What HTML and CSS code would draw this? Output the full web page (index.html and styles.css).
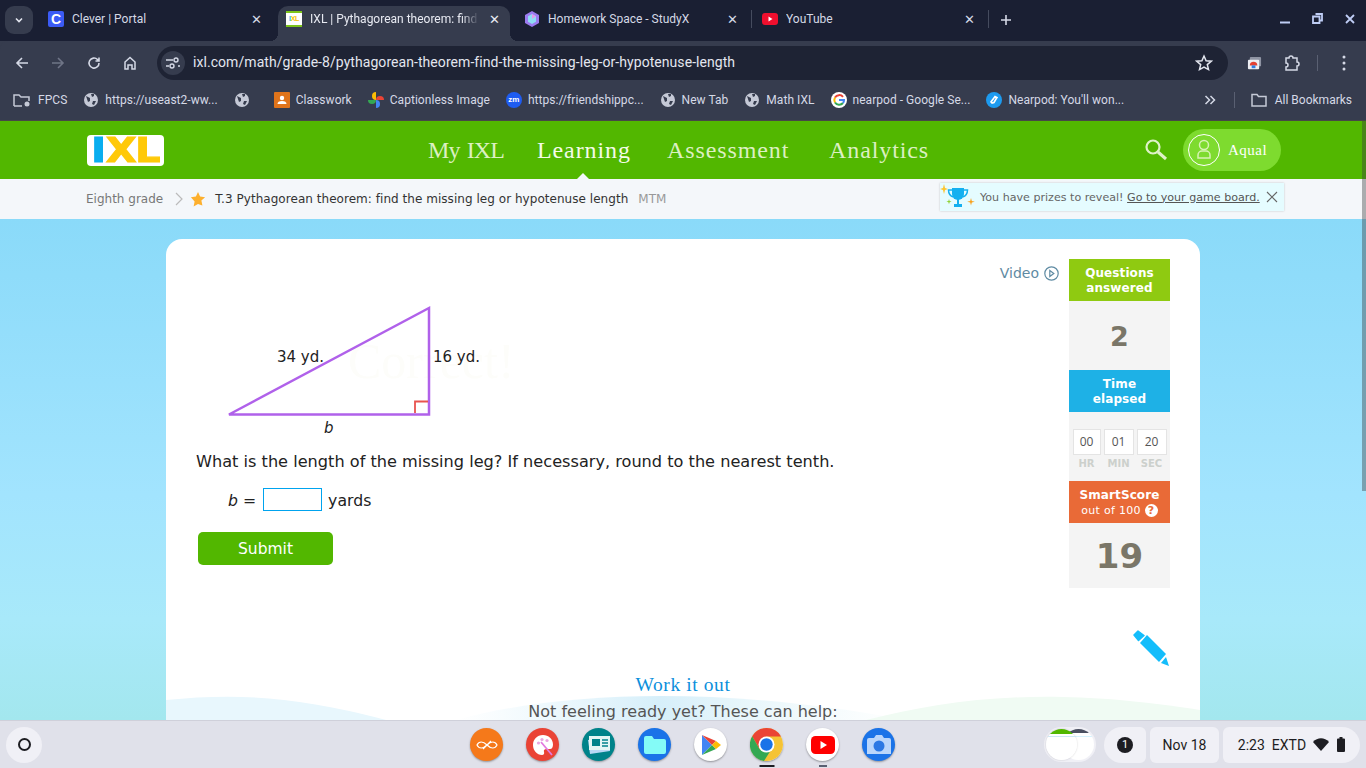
FILE: index.html
```html
<!DOCTYPE html>
<html lang="en">
<head>
  <meta charset="UTF-8" />
  <title>IXL | Pythagorean theorem</title>
  <link rel="stylesheet" href="styles.css">
</head>
<body>
  <!-- browser chrome -->
  <div class="tabstrip">
    <div class="tab-menu"><svg width="12" height="12" viewBox="0 0 12 12"><path d="M3 4.500l3 3 3-3" fill="none" stroke="#e3e6ef" stroke-width="1.600"/></svg></div>
    <div class="tab tab-clever">
      <span class="fav fav-clever">C</span><span class="tab-title">Clever | Portal</span><span class="tab-x">✕</span>
    </div>
    <div class="tab tab-active">
      <span class="fav fav-ixl"><b>I</b><i>XL</i></span><span class="tab-title tab-fade">IXL | Pythagorean theorem: find</span><span class="tab-x">✕</span>
    </div>
    <div class="tab tab-study">
      <svg class="fav" width="16" height="16" viewBox="0 0 16 16"><path d="M8 0l7 4v8l-7 4-7-4V4z" fill="#9c7bf0"/><path d="M8 3l4 2.300v5.400L8 13l-4-2.300V5.300z" fill="#8fdcf5"/><path d="M8 3l4 2.300L8 8z" fill="#e59ae8"/></svg><span class="tab-title">Homework Space - StudyX</span><span class="tab-x">✕</span>
    </div>
    <div class="tab tab-sep">
      <svg class="fav" width="16" height="16" viewBox="0 0 16 16"><rect y="2" width="16" height="12" rx="3" fill="#f00f2e"/><path d="M6.500 5.500l4 2.500-4 2.500z" fill="#fff"/></svg><span class="tab-title">YouTube</span><span class="tab-x">✕</span>
    </div>
    <div class="tab-plus"><svg width="12" height="12" viewBox="0 0 12 12"><path d="M6 1v10M1 6h10" stroke="#d5d9e6" stroke-width="1.600"/></svg></div>
    <div class="win-btns">
      <svg width="10" height="10" viewBox="0 0 10 10"><path d="M0 8.500h10" stroke="#bfcdf5" stroke-width="2"/></svg>
      <svg width="11" height="11" viewBox="0 0 11 11"><path d="M3.500 1h6.500v6.500H7.500M1 3.500h6.500v6.500H1z" fill="none" stroke="#bfcdf5" stroke-width="1.800"/></svg>
      <svg width="10" height="10" viewBox="0 0 10 10"><path d="M1 1l8 8M9 1l-8 8" stroke="#bfcdf5" stroke-width="1.800"/></svg>
    </div>
  </div>

  <div class="toolbar">
    <svg class="tool" width="16" height="16" viewBox="0 0 16 16"><path d="M14 8H3M8 3L3 8l5 5" fill="none" stroke="#d5d9e6" stroke-width="1.600"/></svg>
    <svg class="tool" width="16" height="16" viewBox="0 0 16 16"><path d="M2 8h11M8 3l5 5-5 5" fill="none" stroke="#6f7587" stroke-width="1.600"/></svg>
    <svg class="tool" width="16" height="16" viewBox="0 0 16 16"><path d="M13 8a5 5 0 1 1-1.500-3.500L13 6M13 2.500V6H9.500" fill="none" stroke="#d5d9e6" stroke-width="1.600"/></svg>
    <svg class="tool" width="16" height="16" viewBox="0 0 16 16"><path d="M3 14V7l5-4.500L13 7v7h-3V10H6v4z" fill="none" stroke="#d5d9e6" stroke-width="1.500"/></svg>
    <div class="omnibox">
      <span class="site-btn"><svg width="14" height="12" viewBox="0 0 14 12"><path d="M0 3h7M0 9h3M12 9h2" stroke="#d5d9e6" stroke-width="1.400"/><circle cx="10" cy="3" r="2" fill="none" stroke="#d5d9e6" stroke-width="1.400"/><circle cx="6" cy="9" r="2" fill="none" stroke="#d5d9e6" stroke-width="1.400"/></svg></span>
      <span class="url">ixl.com/math/grade-8/pythagorean-theorem-find-the-missing-leg-or-hypotenuse-length</span>
      <svg class="omni-star" width="18" height="18" viewBox="0 0 18 18"><path d="M9 2l2.100 4.700 5.100.5-3.900 3.400 1.200 5L9 13l-4.500 2.600 1.200-5L1.800 7.200l5.100-.5z" fill="none" stroke="#e3e6ef" stroke-width="1.500"/></svg>
    </div>
    <div class="tool-right">
      <svg width="15" height="15" viewBox="0 0 16 16"><rect x="3" y="1" width="12" height="10" rx="1" fill="#8f94a3"/><rect x="1" y="4" width="12" height="10" rx="1" fill="#eceef3"/><path d="M3 10a4 4 0 0 1 8 0z" fill="#e34133"/><path d="M5 10h4v3H5z" fill="#2f7de1"/></svg>
      <svg class="tool-ext" width="18" height="18" viewBox="0 0 18 18"><path d="M3 4h3a2 2 0 0 1 4 0h4v4a2 2 0 0 1 0 4v4H3v-3a2 2 0 0 0 0-4z" fill="none" stroke="#d5d9e6" stroke-width="1.500"/></svg>
      <span class="tool-sep"></span>
      <svg class="tool-dots" width="4" height="16" viewBox="0 0 4 16"><circle cx="2" cy="2" r="1.500" fill="#d5d9e6"/><circle cx="2" cy="8" r="1.500" fill="#d5d9e6"/><circle cx="2" cy="14" r="1.500" fill="#d5d9e6"/></svg>
    </div>
  </div>

  <div class="bookmarks">
    <a class="bm"><svg width="19" height="16" viewBox="0 0 19 16"><path d="M1 14V3h5l2 2h8v4M1 14h8" fill="none" stroke="#c5c9d6" stroke-width="1.500"/><circle cx="14" cy="12" r="2.500" fill="#c5c9d6"/></svg>FPCS</a>
    <a class="bm"><svg class="globe" width="16" height="16" viewBox="0 0 16 16"><circle cx="8" cy="8" r="7" fill="#c5c9d6"/><path d="M3 4l4 2 0 3-2 1zM10 9l3 0-2 4-2-1zM8 2l3 0 0 2-2 1z" fill="#363c4e"/></svg>https://useast2-ww...</a>
    <a class="bm bm-empty"><svg class="globe" width="16" height="16" viewBox="0 0 16 16"><circle cx="8" cy="8" r="7" fill="#c5c9d6"/><path d="M3 4l4 2 0 3-2 1zM10 9l3 0-2 4-2-1zM8 2l3 0 0 2-2 1z" fill="#363c4e"/></svg></a>
    <a class="bm"><svg width="16" height="16" viewBox="0 0 16 16"><rect width="16" height="16" rx="1" fill="#e0741b"/><circle cx="8" cy="6" r="2.200" fill="#fff"/><path d="M3.500 12a4.500 3 0 0 1 9 0z" fill="#fff"/></svg>Classwork</a>
    <a class="bm"><svg width="16" height="16" viewBox="0 0 16 16"><path d="M8 8V0a4 4 0 0 0 0 8z" fill="#fbbc05"/><path d="M8 8h8a4 4 0 0 0-8 0z" fill="#ea4335"/><path d="M8 8v8a4 4 0 0 0 0-8z" fill="#4285f4"/><path d="M8 8H0a4 4 0 0 0 8 0z" fill="#34a853"/></svg>Captionless Image</a>
    <a class="bm"><span class="fav-zm">zm</span>https://friendshippc...</a>
    <a class="bm"><svg class="globe" width="16" height="16" viewBox="0 0 16 16"><circle cx="8" cy="8" r="7" fill="#c5c9d6"/><path d="M3 4l4 2 0 3-2 1zM10 9l3 0-2 4-2-1zM8 2l3 0 0 2-2 1z" fill="#363c4e"/></svg>New Tab</a>
    <a class="bm"><svg class="globe" width="16" height="16" viewBox="0 0 16 16"><circle cx="8" cy="8" r="7" fill="#c5c9d6"/><path d="M3 4l4 2 0 3-2 1zM10 9l3 0-2 4-2-1zM8 2l3 0 0 2-2 1z" fill="#363c4e"/></svg>Math IXL</a>
    <a class="bm"><svg width="16" height="16" viewBox="0 0 16 16"><circle cx="8" cy="8" r="8" fill="#fff"/><path d="M12 4.800A5 5 0 0 0 4 5.500" fill="none" stroke="#ea4335" stroke-width="2"/><path d="M4 5.500a5 5 0 0 0 0 5" fill="none" stroke="#fbbc05" stroke-width="2"/><path d="M4 10.500a5 5 0 0 0 8 .5" fill="none" stroke="#34a853" stroke-width="2"/><path d="M12 11a5 5 0 0 0 1-3H8" fill="none" stroke="#4285f4" stroke-width="2"/></svg>nearpod - Google Se...</a>
    <a class="bm"><svg width="16" height="16" viewBox="0 0 16 16"><circle cx="8" cy="8" r="8" fill="#1d9bf0"/><path d="M6 11l-1-1 4-5.500 2 1-1 1.500-2 3.500z" fill="none" stroke="#fff" stroke-width="1.600"/></svg>Nearpod: You'll won...</a>
    <span class="bm-more"><svg width="12" height="12" viewBox="0 0 12 12"><path d="M1.500 2l4 4-4 4M6.500 2l4 4-4 4" fill="none" stroke="#d5d9e6" stroke-width="1.500"/></svg></span>
    <span class="bm-sep"></span>
    <a class="bm bm-all"><svg width="18" height="16" viewBox="0 0 18 16"><path d="M2 14V2.500h5l1.500 2H16V14z" fill="none" stroke="#c5c9d6" stroke-width="1.500"/></svg>All Bookmarks</a>
  </div>

  <!-- page -->
  <div class="viewport">
    <div class="scroll-thumb"></div>
    <header class="ixl-head">
      <div class="logo"><div class="logo-text"><span class="logo-i">I</span><span class="logo-x">X</span><span class="logo-l">L</span></div></div>
      <nav class="nav">
        <a class="nav-my">My IXL</a>
        <a class="nav-on">Learning</a>
        <a>Assessment</a>
        <a>Analytics</a>
      </nav>
      <svg class="search" width="26" height="26" viewBox="0 0 26 26"><circle cx="10" cy="10" r="6.500" fill="none" stroke="#dff2c8" stroke-width="2.200"/><path d="M15 15l8 7" stroke="#dff2c8" stroke-width="3"/></svg>
      <div class="user">
        <span class="avatar"><svg width="32" height="32" viewBox="0 0 32 32"><circle cx="16" cy="16" r="15.500" fill="none" stroke="#fff"/><circle cx="16" cy="11" r="4.500" fill="none" stroke="#d8f2b5" stroke-width="1.500"/><path d="M10 24v-3a4 4 0 0 1 4-4h4a4 4 0 0 1 4 4v3z" fill="none" stroke="#d8f2b5" stroke-width="1.500"/></svg></span>
        <span class="user-name">Aqual</span>
      </div>
    </header>

    <div class="crumbs">
      <span class="crumb-grade">Eighth grade</span>
      <svg class="crumb-arrow" width="8" height="14" viewBox="0 0 8 14"><path d="M1 1l6 6-6 6" fill="none" stroke="#bbb" stroke-width="1.200"/></svg>
      <svg class="crumb-star" width="16" height="16" viewBox="0 0 16 16"><path d="M8 1l2.100 4.600 5 .6-3.700 3.400 1 4.900L8 13l-4.400 2.500 1-4.900L.9 6.200l5-.6z" fill="#fdb02e"/></svg>
      <span class="crumb-title">T.3 Pythagorean theorem: find the missing leg or hypotenuse length</span>
      <span class="crumb-code">MTM</span>
      <div class="prize">
        <svg class="trophy" width="36" height="26" viewBox="0 0 36 26"><path d="M12 4h12v6a6 6 0 0 1-12 0z" fill="#14b0f0"/><path d="M12 6H8.500c0 4 1.500 6 5 7M24 6h3.500c0 4-1.500 6-5 7" fill="none" stroke="#14b0f0" stroke-width="1.500"/><path d="M17 15h2v5h3v3h-8v-3h3z" fill="#14b0f0"/><path d="M4 0l1 4 3 1-3 1-1 4-1-4-3-1 3-1z" fill="#fdc52e"/><path d="M9 15l.6 2 2 .6-2 .6-.6 2-.6-2-2-.6 2-.6z" fill="#8fd130"/><path d="M31 14l.8 3 3 .8-3 .8-.8 3-.8-3-3-.8 3-.8z" fill="#f9a11b"/></svg>
        <span class="prize-text">You have prizes to reveal! <u>Go to your game board.</u></span>
        <svg class="prize-x" width="12" height="12" viewBox="0 0 12 12"><path d="M1 1l10 10M11 1L1 11" stroke="#666" stroke-width="1.100"/></svg>
      </div>
    </div>

    <div class="page">
      <div class="card">
        <svg class="waves" width="1034" height="32" viewBox="0 0 1034 32" preserveAspectRatio="none">
          <defs>
            <linearGradient id="midfade" x1="0" x2="1" y1="0" y2="0"><stop offset="0" stop-color="#def3fb" stop-opacity="0"/><stop offset=".45" stop-color="#d6effa"/><stop offset="1" stop-color="#e4f6f8" stop-opacity="0"/></linearGradient>
          </defs>
          <path d="M0 12C70 5 130 8 220 32H0z" fill="#e8f7fd"/>
          <path d="M290 32C400 2 560 -2 740 32z" fill="url(#midfade)"/>
          <path d="M700 32C790 10 880 -2 1034 22V32z" fill="#f0fbf3"/>
        </svg>
        <div class="practice">
          <div class="main">
            <a class="video">Video <svg width="15" height="15" viewBox="0 0 15 15"><circle cx="7.500" cy="7.500" r="6.700" fill="none" stroke="#5f8ba3" stroke-width="1.200"/><path d="M5.800 4.500l4 3-4 3z" fill="none" stroke="#5f8ba3" stroke-width="1.200"/></svg></a>
            <svg class="diagram" width="320" height="140" viewBox="0 0 320 140">
              <text class="ghost" x="128" y="78">Correct!</text>
              <path d="M209 8V114.500H9z" fill="none" stroke="#b061ea" stroke-width="2.500"/>
              <path d="M195 113V101.500H208" fill="none" stroke="#e8534f" stroke-width="1.800"/>
              <text class="dia-label" x="57" y="62">34 yd.</text>
              <text class="dia-label" x="213" y="62">16 yd.</text>
              <text class="dia-label dia-var" x="104" y="133">b</text>
            </svg>
            <p class="question">What is the length of the missing leg? If necessary, round to the nearest tenth.</p>
            <div class="answer">
              <span class="eq"><i>b</i> =</span>
              <input class="answer-input" type="text" />
              <span>yards</span>
            </div>
            <button class="submit">Submit</button>
          </div>
          <aside class="side">
            <div class="side-head side-green">Questions<br>answered</div>
            <div class="side-count">2</div>
            <div class="side-head side-blue">Time<br>elapsed</div>
            <div class="timer">
              <div class="timer-cell"><span class="timer-num">00</span><span class="timer-unit">HR</span></div>
              <div class="timer-cell"><span class="timer-num">01</span><span class="timer-unit">MIN</span></div>
              <div class="timer-cell"><span class="timer-num">20</span><span class="timer-unit">SEC</span></div>
            </div>
            <div class="side-head side-orange">SmartScore<br><span class="side-sub">out of 100 <span class="help">?</span></span></div>
            <div class="side-score">19</div>
          </aside>
        </div>
        <div class="pencil-row">
          <svg width="37" height="36" viewBox="0 0 37 36"><path d="M5 1l6 4.500-5.500 5L1 5z" fill="#14bdfb" stroke="#14bdfb" stroke-width="1.500" stroke-linejoin="round"/><path d="M14 5l19 19-7 8L7 13z" fill="#14bdfb"/><path d="M33 27l3 9-8-3z" fill="#14bdfb"/></svg>
        </div>
        <h3 class="work">Work it out</h3>
        <p class="ready">Not feeling ready yet? These can help:</p>
      </div>
    </div>
  </div>

  <!-- chromeos shelf -->
  <footer class="shelf">
    <div class="launcher"><span class="launcher-ring"></span></div>
    <div class="apps">
      <span class="app app-orange"><svg width="22" height="10" viewBox="0 0 22 10"><path d="M1 5c2-4 6-4 10 0s8 4 10 0c-2-4-6-4-10 0s-8 4-10 0zM7 9l8-8" fill="none" stroke="#fff" stroke-width="1.200"/></svg></span>
      <span class="app app-red"><svg width="24" height="24" viewBox="0 0 24 24"><path d="M12 2C6 2 2 6.500 2 12s4 10 9 10c2 0 2.500-1.500 2-3-.6-1.700.6-3 2.500-3H19c2 0 3-2 3-4.500C22 6 17.500 2 12 2z" fill="#fff"/><circle cx="7.500" cy="10" r="1.600" fill="#e9a5e0"/><circle cx="11" cy="6.500" r="1.600" fill="#e9a5e0"/><circle cx="16" cy="7.500" r="1.600" fill="#e9a5e0"/><path d="M10 9l11 13" stroke="#e27be0" stroke-width="1.800"/></svg></span>
      <span class="app app-teal"><svg width="24" height="20" viewBox="0 0 24 20"><path d="M1 5l20-2 2 13-20 3z" fill="#b8d8f5"/><rect x="2" y="1" width="21" height="14" fill="#e4f6f4"/><rect x="5" y="4" width="8" height="7" fill="#00838a"/><path d="M15 5h6M15 8h6M15 11h6" stroke="#00838a" stroke-width="1.500"/></svg></span>
      <span class="app app-blue"><svg width="22" height="18" viewBox="0 0 22 18"><path d="M0 2a2 2 0 0 1 2-2h6l2 3h10a2 2 0 0 1 2 2v11a2 2 0 0 1-2 2H2a2 2 0 0 1-2-2z" fill="#84fbf7"/></svg></span>
      <span class="app app-white"><svg width="20" height="22" viewBox="0 0 20 22"><path d="M1 1v20l10-10z" fill="#4285f4"/><path d="M1 1l10 10 4-4z" fill="#ea4335"/><path d="M1 21l10-10 4 4z" fill="#34a853"/><path d="M15 7l5 4-5 4-4-4z" fill="#fbbc05"/></svg></span>
      <span class="app app-chrome"><svg width="33" height="33" viewBox="0 0 33 33"><circle cx="16.500" cy="16.500" r="16.500" fill="#f5c335"/><path d="M16.500 0A16.500 16.500 0 0 0 2.200 8.200l7.500 13 6.800-12.700H31A16.500 16.500 0 0 0 16.500 0z" fill="#ea4335"/><path d="M2.200 8.200A16.500 16.500 0 0 0 14 33l7.600-12-12 .2z" fill="#34a853"/><circle cx="16.500" cy="16.500" r="8" fill="#fff"/><circle cx="16.500" cy="16.500" r="6.200" fill="#1a73e8"/></svg><span class="dot dot-dark"></span></span>
      <span class="app app-white"><svg width="24" height="18" viewBox="0 0 24 18"><rect width="24" height="18" rx="4.500" fill="#f00"/><path d="M9.500 5l6.500 4-6.500 4z" fill="#fff"/></svg><span class="dot dot-gray"></span></span>
      <span class="app app-blue"><svg width="24" height="22" viewBox="0 0 24 22"><path d="M2 4h5l2-3h6l2 3h5a2 2 0 0 1 2 2v14H0V6a2 2 0 0 1 2-2z" fill="#b9d6fb"/><circle cx="12" cy="12" r="5.500" fill="#2a78e4"/></svg></span>
    </div>
    <div class="tray">
      <div class="preview"><span class="preview-a"></span><span class="preview-b"></span></div>
      <div class="pill pill-notif"><span class="notif-dot">1</span></div>
      <div class="pill pill-date">Nov 18</div>
      <div class="pill pill-time">
        <span>2:23</span><span>EXTD</span>
        <svg width="16" height="13" viewBox="0 0 16 13"><path d="M0 4c4.500-5 11.500-5 16 0l-8 9z" fill="#1d1d22"/></svg>
        <svg class="battery" width="8" height="15" viewBox="0 0 8 15"><path d="M2.500 0h3v1.500H7a1 1 0 0 1 1 1V14a1 1 0 0 1-1 1H1a1 1 0 0 1-1-1V2.500a1 1 0 0 1 1-1h1.500z" fill="#1d1d22"/></svg>
      </div>
    </div>
  </footer>
</body>
</html>
```

FILE: styles.css
```css
* {
  box-sizing: border-box;
}
html, body {
  margin: 0;
  height: 768px;
  overflow: hidden;
}
body {
  display: flex;
  flex-direction: column;
  font-family: "DejaVu Sans", sans-serif;
  background: #363c4e;
}

/* tab strip */
.tabstrip {
  height: 41px;
  flex: none;
  display: flex;
  align-items: flex-end;
  background: #1a1f33;
  color: #d5d9e6;
  font: 12px Roboto, sans-serif;
  padding-left: 5px;
}
.tab-menu {
  width: 28px;
  height: 28px;
  margin: 0 5px 7px 0;
  border-radius: 9px;
  background: #363c4e;
  display: flex;
  align-items: center;
  justify-content: center;
}
.tab {
  height: 35px;
  padding-bottom: 9px;
  display: flex;
  align-items: center;
  flex: none;
  position: relative;
}
.tab-clever {
  width: 240px;
  padding-left: 10px;
  padding-right: 12px;
}
.tab-active {
  width: 232px;
  margin-right: 6px;
  padding-left: 8px;
  padding-right: 6px;
  background: #363c4e;
  border-radius: 10px 10px 0 0;
  color: #e8eaf2;
}
.tab-active::before,
.tab-active::after {
  content: "";
  position: absolute;
  bottom: 0;
  width: 8px;
  height: 8px;
}
.tab-active::before {
  left: -8px;
  background: radial-gradient(circle at 0 0, transparent 8px, #363c4e 8px);
}
.tab-active::after {
  right: -8px;
  background: radial-gradient(circle at 100% 0, transparent 8px, #363c4e 8px);
}
.tab-study {
  width: 235px;
  padding-left: 8px;
  padding-right: 9px;
}
.tab-sep {
  width: 238px;
  height: 18px;
  margin-bottom: 13px;
  padding: 0 9px 0 10px;
  border-left: 1px solid #454b5e;
  border-right: 1px solid #454b5e;
}
.fav {
  width: 16px;
  height: 16px;
  flex: none;
  margin-right: 8px;
}
.fav-clever {
  background: #3b5bf5;
  color: #fff;
  border-radius: 2px;
  font: bold 14px/16px "Liberation Sans", sans-serif;
  text-align: center;
}
.fav-ixl {
  background: #fff;
  border-top: 2px solid #7cc41a;
  border-bottom: 2px solid #7cc41a;
  font: 900 7px/12px "Liberation Sans", sans-serif;
  text-align: center;
  letter-spacing: -0.3px;
}
.fav-ixl b {
  color: #14b0f0;
}
.fav-ixl i {
  color: #f4c200;
  font-style: normal;
  font-weight: bold;
}
.tab-title {
  flex: 1;
  white-space: nowrap;
  overflow: hidden;
}
.tab-fade {
  margin-right: 6px;
  -webkit-mask-image: linear-gradient(to right, #000 90%, transparent);
  mask-image: linear-gradient(to right, #000 90%, transparent);
}
.tab-x {
  font-size: 13px;
  width: 18px;
  text-align: center;
  margin-right: 1px;
}
.tab-plus {
  margin: 0 0 11px 11px;
  height: 20px;
  width: 12px;
  display: flex;
  align-items: center;
}
.win-btns {
  margin-left: auto;
  align-self: flex-start;
  padding: 13px 11px 0 0;
  display: flex;
  gap: 22px;
  align-items: center;
}

/* toolbar */
.toolbar {
  height: 40px;
  flex: none;
  background: #363c4e;
  border-radius: 8px 8px 0 0;
  display: flex;
  align-items: center;
  padding: 4px 0 0 14px;
}
.tool {
  flex: none;
  margin-right: 20px;
}
.omnibox {
  width: 1071px;
  height: 34px;
  background: #1e2334;
  border-radius: 17px;
  display: flex;
  align-items: center;
  padding: 0 15px 0 4px;
  margin-left: -1px;
}
.site-btn {
  width: 24px;
  height: 24px;
  border-radius: 50%;
  background: #363c4e;
  display: flex;
  align-items: center;
  justify-content: center;
  margin-right: 8px;
}
.url {
  flex: 1;
  font: 14px Roboto, sans-serif;
  letter-spacing: 0.06px;
  margin-bottom: 2px;
  color: #e3e6ef;
}
.tool-right {
  flex: 1;
  display: flex;
  align-items: center;
  padding-left: 19px;
}
.tool-ext {
  margin-left: 21px;
}
.tool-sep {
  width: 1px;
  height: 16px;
  background: #5a6072;
  margin-left: 16px;
}
.tool-dots {
  margin-left: 24px;
}

/* bookmarks */
.bookmarks {
  height: 39px;
  flex: none;
  background: #363c4e;
  display: flex;
  align-items: center;
  padding: 0 14px 2px 13px;
  font: 12px Roboto, sans-serif;
  letter-spacing: 0.04px;
  color: #d5d9e6;
  gap: 16px;
}
.bm {
  display: flex;
  align-items: center;
  gap: 6px;
  white-space: nowrap;
}
.bm-empty {
  margin-right: 8px;
}
.fav-zm {
  width: 16px;
  height: 16px;
  border-radius: 50%;
  background: #1f5cf0;
  color: #fff;
  font: bold 8px/16px "Liberation Sans", sans-serif;
  text-align: center;
}
.bm-more {
  margin-left: auto;
  display: flex;
}
.bm-sep {
  width: 1px;
  height: 16px;
  background: #5a6072;
  margin-left: 2px;
}
.bm-all {
  margin-left: -1px;
  gap: 7px;
  letter-spacing: 0;
}

/* ixl page */
.viewport {
  flex: 1;
  min-height: 0;
  position: relative;
  display: flex;
  flex-direction: column;
  overflow: hidden;
  border-top: 1px solid #474747;
}
.scroll-thumb {
  position: absolute;
  right: 0;
  top: 0;
  width: 4px;
  height: 370px;
  background: rgba(60, 60, 60, 0.4);
  z-index: 5;
}
.ixl-head {
  height: 58px;
  flex: none;
  background: #52b700;
  display: flex;
  align-items: center;
  padding: 0 85px 0 87px;
}
.logo {
  width: 77px;
  height: 31px;
  background: #fff;
  border-radius: 4px;
  display: flex;
  justify-content: center;
}
.logo-text {
  font: bold 34px/31px "DejaVu Sans", sans-serif;
  letter-spacing: -1px;
  transform: scaleX(1.16);
  -webkit-text-stroke: 1.200px;
}
.logo-i {
  color: #09aeef;
  margin-right: 1px;
}
.logo-x, .logo-l {
  color: #ffc908;
}
.nav {
  display: grid;
  grid-template-columns: 109px 130px 162px auto;
  margin-left: 264px;
  font: 24px "Liberation Serif", serif;
  letter-spacing: 0.9px;
  color: #dcf0c2;
}
.nav a {
  position: relative;
}
.nav-my {
  letter-spacing: -0.9px;
  word-spacing: 2px;
}
.nav-on {
  color: #f4fbe9;
}
.nav-on::after {
  content: "";
  position: absolute;
  left: 39px;
  top: 36px;
  border: 7px solid transparent;
  border-top: 0;
  border-bottom-color: #f4f7fa;
}
.search {
  margin-left: auto;
}
.user {
  margin-left: 14px;
  width: 98px;
  height: 42px;
  border-radius: 21px;
  background: #7edb2f;
  display: flex;
  align-items: center;
  padding-left: 5px;
}
.avatar {
  display: flex;
}
.user-name {
  margin-left: 8px;
  font: 15px "Liberation Serif", serif;
  letter-spacing: 0.5px;
  color: #fff;
}

.crumbs {
  height: 40px;
  flex: none;
  background: #f4f7fa;
  display: flex;
  align-items: center;
  padding: 0 82px 0 86px;
  font-size: 12px;
  color: #333;
}
.crumb-grade {
  color: #777;
}
.crumb-arrow {
  margin-left: 12px;
}
.crumb-star {
  margin: 0 9px 0 7px;
}
.crumb-title {
  letter-spacing: 0.04px;
}
.crumb-code {
  margin-left: 10px;
  color: #999;
}
.prize {
  margin: 0 0 4px auto;
  width: 344px;
  height: 28px;
  background: #e5fcff;
  box-shadow: 0 0 2px rgba(0, 0, 0, 0.2);
  display: flex;
  align-items: center;
  font-size: 11.100px;
  color: #666;
}
.trophy {
  flex: none;
  margin: 0 4px 0 0;
}
.prize-text {
  white-space: nowrap;
}
.prize-text u {
  color: #555;
}
.prize-x {
  flex: none;
  margin-left: 6px;
}

.page {
  flex: 1;
  min-height: 0;
  padding: 20px 166px 0;
  background: linear-gradient(#8adaf9, #a2e4fe 55%, #a8e9fa 80%, #a3e7ee);
  overflow: hidden;
}
.card {
  width: 1034px;
  height: 560px;
  background: #fff;
  border-radius: 16px 16px 0 0;
  padding: 20px 30px 0;
  position: relative;
}
.waves {
  position: absolute;
  left: 0;
  top: 449px;
}
.practice {
  display: flex;
}
.main {
  flex: 1;
  display: flex;
  flex-direction: column;
  align-items: flex-start;
}
.video {
  height: 41px;
  align-self: flex-end;
  margin-right: 10px;
  padding-top: 6px;
  font-size: 14px;
  color: #5f8ba3;
  display: flex;
  gap: 5px;
  align-items: flex-start;
}
.video svg {
  margin-top: 1px;
}
.diagram {
  margin-left: 24px;
  overflow: visible;
}
.ghost {
  font: 50px "Liberation Serif", serif;
  fill: #fdfdfa;
}
.dia-label {
  font: 15px "DejaVu Sans", sans-serif;
  fill: #222;
}
.dia-var {
  font-style: italic;
}
.question {
  margin: 11px 0 17px;
  padding-top: 1px;
  height: 20px;
  font-size: 16.150px;
  line-height: 20px;
  color: #222;
}
.answer {
  display: flex;
  align-items: center;
  margin-left: 32px;
  font-size: 15.700px;
  color: #222;
  gap: 6px;
}
.answer span {
  padding-top: 2px;
}
.eq {
  margin-right: 1px;
}
.answer-input {
  width: 59px;
  height: 23px;
  border: 1px solid #00a3ee;
  background: #fff;
}
.submit {
  margin: 21px 0 0 2px;
  width: 135px;
  height: 33px;
  border: none;
  border-radius: 5px;
  background: #52b700;
  color: #fff;
  font: 15.500px "DejaVu Sans", sans-serif;
}

.side {
  width: 101px;
  flex: none;
  background: #f4f4f4;
  text-align: center;
}
.side-head {
  height: 42px;
  padding-top: 7px;
  color: #fff;
  font-size: 12px;
  font-weight: bold;
  line-height: 15px;
  letter-spacing: 0.1px;
}
.side-green {
  background: #8fca11;
}
.side-blue {
  background: #1eb1e6;
}
.side-orange {
  background: #e96a37;
}
.side-sub {
  font-size: 11px;
  font-weight: normal;
  letter-spacing: 0.3px;
}
.help {
  display: inline-block;
  width: 13px;
  height: 13px;
  border-radius: 50%;
  background: #fff;
  color: #e96a37;
  font: bold 11px/13px "DejaVu Sans", sans-serif;
}
.side-count {
  height: 69px;
  font-size: 27px;
  font-weight: bold;
  line-height: 72px;
  color: #7a7668;
}
.timer {
  height: 69px;
  display: flex;
  justify-content: center;
  gap: 3px;
  padding-top: 17px;
}
.timer-cell {
  display: flex;
  flex-direction: column;
  align-items: center;
}
.timer-num {
  width: 30px;
  height: 26px;
  background: #fff;
  border: 1px solid #e4e4e4;
  font: 12px/24px "Open Sans", sans-serif;
  color: #555;
}
.timer-cell:first-child .timer-num {
  width: 28px;
}
.timer-unit {
  margin-top: 3px;
  font-size: 10px;
  font-weight: bold;
  line-height: 12px;
  color: #ccd0cc;
}
.side-score {
  height: 65px;
  font-size: 34px;
  font-weight: bold;
  line-height: 66px;
  color: #7a7668;
}
.pencil-row {
  margin-top: 42px;
  display: flex;
  justify-content: flex-end;
}
.work {
  margin: 7px 0 0;
  text-align: center;
  font: normal 19.500px/24px "Liberation Serif", serif;
  letter-spacing: 0.6px;
  color: #0b8fdc;
  position: relative;
}
.ready {
  margin: 5px 0 0;
  text-align: center;
  font-size: 16px;
  line-height: 20px;
  color: #555;
  position: relative;
}

/* shelf */
.shelf {
  height: 48px;
  flex: none;
  background: #e0e1ea;
  border-top: 1px solid #cfd0da;
  display: flex;
  align-items: center;
  padding: 0 6px;
  position: relative;
  color: #1d1d22;
  font: 14px Roboto, sans-serif;
}
.launcher {
  width: 36px;
  height: 36px;
  border-radius: 50%;
  background: #f0f0f6;
  display: flex;
  align-items: center;
  justify-content: center;
}
.launcher-ring {
  width: 13px;
  height: 13px;
  border: 2px solid #1d1d22;
  border-radius: 50%;
}
.apps {
  display: flex;
  gap: 23px;
  margin-left: 428px;
}
.app {
  width: 33px;
  height: 33px;
  border-radius: 50%;
  display: flex;
  align-items: center;
  justify-content: center;
  box-shadow: 0 1px 2px rgba(0, 0, 0, 0.35);
  position: relative;
}
.app-orange { background: #f5791a; }
.app-red { background: #ea4335; }
.app-teal { background: #00838a; }
.app-blue { background: #1a73e8; }
.app-white { background: #fff; }
.app-chrome { background: #fff; }
.dot {
  position: absolute;
  bottom: -6px;
  left: 50%;
  height: 2px;
  transform: translateX(-50%);
}
.dot-dark {
  width: 15px;
  background: #1d1d22;
}
.dot-gray {
  width: 8px;
  background: #5a6072;
}
.tray {
  margin-left: auto;
  display: flex;
  align-items: center;
  gap: 4px;
}
.preview {
  width: 52px;
  height: 35px;
  border-radius: 18px;
  background: #f0f0f6;
  display: flex;
  padding: 2px;
  margin-right: 4px;
}
.preview-a, .preview-b {
  display: block;
  width: 31px;
  height: 31px;
  border-radius: 50%;
}
.preview-a {
  background: linear-gradient(#52b700 16%, #fff 16%, #fff 24%, #c9e6f5 24%, #fff 27%);
  position: relative;
  z-index: 1;
  box-shadow: 0 0 2px rgba(0, 0, 0, 0.2);
}
.preview-b {
  margin-left: -14px;
  background: linear-gradient(#4a4f60 14%, #fff 14%, #fff 22%, #a2e4fe 22%, #fff 26%);
}
.pill {
  height: 36px;
  background: #f0f0f6;
  border-radius: 6px;
  display: flex;
  align-items: center;
  justify-content: center;
}
.pill-notif {
  width: 42px;
  border-radius: 18px 6px 6px 18px;
}
.notif-dot {
  width: 16px;
  height: 16px;
  border-radius: 50%;
  background: #1d1d22;
  color: #fff;
  font-size: 11px;
  line-height: 16px;
  text-align: center;
}
.pill-date {
  width: 69px;
  font-size: 14px;
}
.pill-time {
  width: 137px;
  border-radius: 6px 18px 18px 6px;
  gap: 7px;
  font-size: 14px;
}
.battery {
  margin-left: 1px;
}
```
